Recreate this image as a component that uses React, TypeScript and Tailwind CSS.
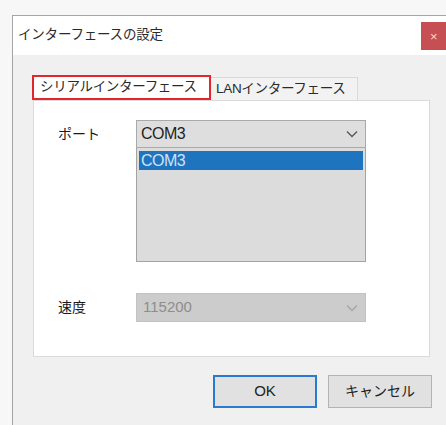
import React from "react";

const font = { fontFamily: '"Liberation Sans", "Noto Sans CJK JP", sans-serif' };

// small down-arrow used by both combo boxes
const Chevron = ({ color }: { color: string }) => (
  <svg width="12" height="8" viewBox="0 0 12 8" fill="none">
    <path d="M1 1.5 L6 6.5 L11 1.5" stroke={color} strokeWidth="1.4" />
  </svg>
);

const Combo = ({ value, disabled }: { value: string; disabled?: boolean }) => (
  <div
    className={
      disabled
        ? "w-[230px] h-[29px] bg-[#cccccc] border border-[#c2c2c2] flex items-center justify-between pl-[6px] pr-[7px] text-[15px] text-[#8e8e8e]"
        : "w-[230px] h-[28px] bg-[#dedede] border border-[#a9a9a9] flex items-center justify-between pl-[4px] pr-[7px] text-[16px] text-[#1f1f1f] tracking-[-0.5px]"
    }
  >
    <span>{value}</span>
    <Chevron color={disabled ? "#a6a6a6" : "#5a5a5a"} />
  </div>
);

export default function App() {
  return (
    <div className="w-[446px] h-[425px] bg-[#f7f7f7] pl-[12px] pt-[15px] overflow-hidden" style={font}>
      <div className="w-[440px] h-full border-l border-t border-[#a5a5a5] bg-[#f0f0f0] flex flex-col">
        {/* title bar */}
        <div className="h-[39px] bg-white flex justify-between shrink-0">
          <span className="self-center pl-[5px] text-[13.5px] text-[#2a2a2a] tracking-[-0.2px]">インターフェースの設定</span>
          <div className="mt-[6px] w-[31px] h-[28px] bg-[#c64f53] flex items-center pl-[9px] text-[#f3d6d6] text-[13px] leading-none">
            ×
          </div>
        </div>

        {/* tabs */}
        <div className="flex items-end pl-[19px] pt-[20px]">
          <div className="w-[179px] h-[25px] border-2 border-[#e3262b] bg-white pl-[6px] flex items-center text-[13.5px] text-[#2a2a2a] tracking-[-0.3px]">
            シリアルインターフェース
          </div>
          <div className="w-[147px] h-[23px] border border-b-0 border-l-0 border-[#d9d9d9] bg-[#f2f2f2] pl-[5px] flex items-center text-[13.5px] text-[#2a2a2a] tracking-[-0.3px]">
            LANインターフェース
          </div>
        </div>

        {/* tab page */}
        <div className="ml-[20px] w-[397px] h-[257px] bg-white border border-[#dadada] pl-[24px] pt-[19px]">
          <div className="flex">
            <span className="w-[78px] pt-[4px] text-[14px] text-[#1a1a1a]">ポート</span>
            <div className="flex flex-col">
              <Combo value="COM3" />
              <div className="w-[230px] h-[114px] bg-[#dcdcdc] border border-t-0 border-[#a3a3a3] px-[2px] pt-[3px]">
                <div className="h-[19px] bg-[#1f74bf] text-[#cfe2f4] text-[16px] leading-[19px] pl-[2px] tracking-[-0.5px]">COM3</div>
              </div>
            </div>
          </div>
          <div className="flex items-center mt-[31px]">
            <span className="w-[78px] text-[14px] text-[#1a1a1a]">速度</span>
            <Combo value="115200" disabled />
          </div>
        </div>

        {/* dialog buttons */}
        <div className="flex gap-[11px] ml-[200px] mt-[18px]">
          <button className="w-[104px] h-[33px] bg-[#e1e1e1] border-2 border-[#2c7ad0] text-[15px] text-[#222]">OK</button>
          <button className="w-[104px] h-[33px] bg-[#e1e1e1] border border-[#b3b3b3] text-[14px] text-[#222]">キャンセル</button>
        </div>
      </div>
    </div>
  );
}
